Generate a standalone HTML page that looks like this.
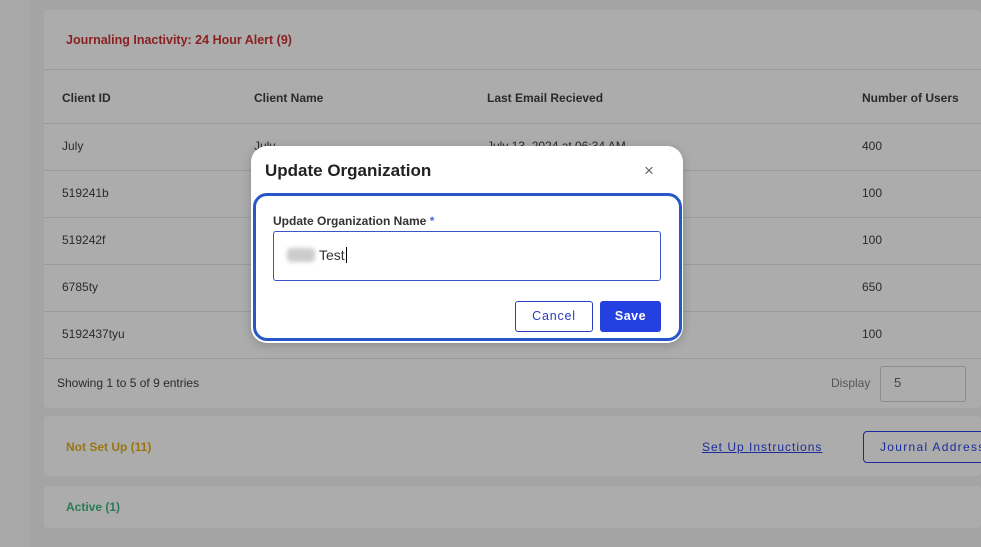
<!DOCTYPE html><html><head><style>
*{box-sizing:border-box;margin:0;padding:0}
body{width:981px;height:547px;overflow:hidden;background:#a4a4a4;font-family:"Liberation Sans",sans-serif;position:relative;color:#2a2a2a}
.strip{position:absolute;left:0;top:0;width:30px;height:547px;background:#a8a8a8}
.card{position:absolute;left:44px;right:0;background:#acacac;border-radius:4px}
.t{position:absolute;font-size:12px}
.hl{position:absolute;left:44px;right:0;height:1px;background:#999}
.b{font-weight:bold}
</style></head><body>
<div class="strip"></div>
<div class="card" style="top:10px;height:398px"></div>
<div class="t b" style="left:66px;top:33px;font-size:12.5px;color:#8a2020">Journaling Inactivity: 24 Hour Alert (9)</div>
<div class="hl" style="top:69px"></div>
<div class="hl" style="top:123px"></div><div class="hl" style="top:170px"></div><div class="hl" style="top:217px"></div><div class="hl" style="top:264px"></div><div class="hl" style="top:311px"></div><div class="hl" style="top:358px"></div>
<div class="t b" style="left:62px;top:91px">Client ID</div>
<div class="t b" style="left:254px;top:91px">Client Name</div>
<div class="t b" style="left:487px;top:91px">Last Email Recieved</div>
<div class="t b" style="left:862px;top:91px">Number of Users</div>
<div class="t" style="left:62px;top:139px">July</div><div class="t" style="left:254px;top:139px">July</div><div class="t" style="left:487px;top:139px">July 13, 2024 at 06:34 AM</div><div class="t" style="left:862px;top:139px">400</div>
<div class="t" style="left:62px;top:186px">519241b</div><div class="t" style="left:862px;top:186px">100</div>
<div class="t" style="left:62px;top:233px">519242f</div><div class="t" style="left:862px;top:233px">100</div>
<div class="t" style="left:62px;top:280px">6785ty</div><div class="t" style="left:862px;top:280px">650</div>
<div class="t" style="left:62px;top:327px">5192437tyu</div><div class="t" style="left:862px;top:327px">100</div>
<div class="t" style="left:57px;top:376px">Showing 1 to 5 of 9 entries</div>
<div class="t" style="left:831px;top:376px;color:#555">Display</div>
<div style="position:absolute;left:880px;top:366px;width:86px;height:36px;border:1px solid #8c8c8c;border-radius:3px"></div>
<div class="t" style="left:894px;top:375px;font-size:13px;color:#444">5</div>
<div class="card" style="top:416px;height:60px"></div>
<div class="t b" style="left:66px;top:440px;color:#9a7510">Not Set Up (11)</div>
<div class="t" style="left:702px;top:440px;color:#1c2c9a;text-decoration:underline;letter-spacing:1px">Set Up Instructions</div>
<div style="position:absolute;left:863px;top:431px;width:140px;height:32px;border:1px solid #1c2c9a;border-radius:4px"></div>
<div class="t" style="left:880px;top:440px;color:#1c2c9a;letter-spacing:1.3px;white-space:nowrap">Journal Address</div>
<div class="card" style="top:486px;height:42px"></div>
<div class="t b" style="left:66px;top:500px;color:#2a7a5a">Active (1)</div>
<div style="position:absolute;left:251px;top:146px;width:432px;height:197px;background:#fff;border-radius:16px;box-shadow:0 2px 10px rgba(0,0,0,.2)"></div>
<div class="t b" style="left:265px;top:161px;font-size:17px;color:#222">Update Organization</div>
<div class="t" style="left:644px;top:161px;font-size:17px;color:#666">×</div>
<div style="position:absolute;left:253px;top:193px;width:429px;height:148px;border:3px solid #2757c9;border-radius:14px"></div>
<div class="t b" style="left:273px;top:214px;color:#333">Update Organization Name <span style="color:#4a6ae0">*</span></div>
<div style="position:absolute;left:273px;top:231px;width:388px;height:50px;border:1px solid #3a55c8;border-radius:3px"></div>
<div style="position:absolute;left:287px;top:248px;width:28px;height:14px;background:#ccc;border-radius:4px;filter:blur(2px)"></div>
<div class="t" style="left:319px;top:247px;font-size:14px;color:#333">Test<span style="border-left:1px solid #000;margin-left:1px"></span></div>
<div style="position:absolute;left:515px;top:301px;width:78px;height:31px;border:1px solid #2a3cc0;border-radius:3px;color:#2a3cc0;font-size:12.5px;text-align:center;line-height:29px;letter-spacing:.8px">Cancel</div>
<div style="position:absolute;left:600px;top:301px;width:61px;height:31px;background:#2540e0;border-radius:3px;color:#fff;font-size:12.5px;font-weight:bold;text-align:center;line-height:31px;letter-spacing:.5px">Save</div>
</body></html>
